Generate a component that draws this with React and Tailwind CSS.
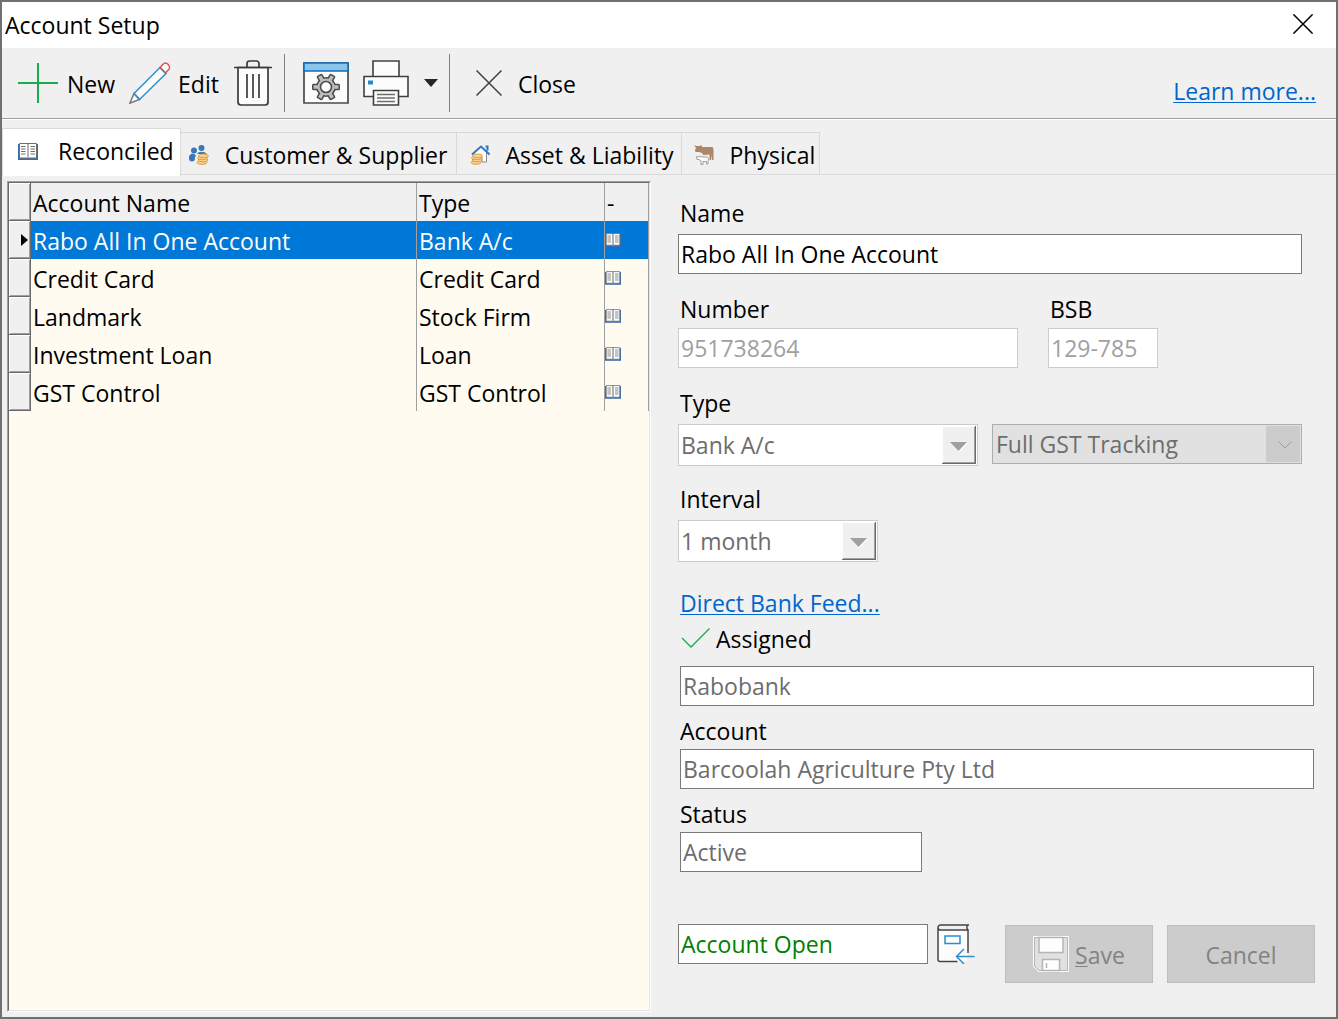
import { useState } from 'react';
import clsx from 'clsx';

const ACCOUNTS = [
  { name: 'Rabo All In One Account', type: 'Bank A/c' },
  { name: 'Credit Card', type: 'Credit Card' },
  { name: 'Landmark', type: 'Stock Firm' },
  { name: 'Investment Loan', type: 'Loan' },
  { name: 'GST Control', type: 'GST Control' },
];

const FIELD = 'block h-10 w-full border bg-white px-[2px] text-[23px]';
const FIELD_NORMAL = 'border-[#7a7a7a]';
const FIELD_DISABLED = 'border-[#cccccc] text-[#a0a0a0]';
const FIELD_READONLY = 'border-[#7a7a7a] text-[#6d6d6d]';
const LABEL = 'block h-8 leading-[30px]';
const RAISED = 'border-b border-r border-[#696969] bg-[#f0f0f0] shadow-[inset_1px_1px_0_#fff,inset_-1px_-1px_0_#a0a0a0]';
const CELL = 'truncate border-r border-[#a0a0a0] px-[2px] pb-0 pt-[2px]';

function PlusIcon() {
  return (
    <svg className="h-10 w-10" viewBox="0 0 40 40" stroke="#18ab50" strokeWidth="2">
      <path d="M20 0v40M0 20h40" />
    </svg>
  );
}

function PencilIcon() {
  return (
    <svg className="h-[42px] w-[42px]" viewBox="0 0 42 42" fill="none" strokeWidth="1.5">
      <path d="M5 31.5 31 5.5l6 6L10.500 37.5z" fill="#fcfcfc" stroke="#2d8fd0" />
      <path d="M31 5.500l3-3.200c1.500-1.500 3.500-1.500 5 0s2 4 .5 5.500L36.500 11z" fill="#fcfcfc" stroke="#e94b4b" />
      <path d="M31 5.500l5.500 5.500" stroke="#777777" />
      <path d="M5 31.500 .8 41.200l9.700-3.700z" fill="#fcfcfc" stroke="#777777" />
      <path d="M5 31.500l5.500 6" stroke="#2d8fd0" />
    </svg>
  );
}

function TrashIcon() {
  return (
    <svg className="h-[46px] w-[38px]" viewBox="0 0 38 46" fill="none" stroke="#3b3b3b" strokeWidth="1.700">
      <path d="M4 7.500h30V42a3 3 0 0 1-3 3H7a3 3 0 0 1-3-3z" fill="#fcfcfc" />
      <path d="M0 7.500h38M13 7V3.500A2.500 2.500 0 0 1 15.500 1h7A2.500 2.500 0 0 1 25 3.500V7" />
      <path d="M13 14v24M19 14v24M25 14v24" />
    </svg>
  );
}

function SettingsIcon() {
  return (
    <svg className="h-[42px] w-[46px]" viewBox="0 0 46 42">
      <path d="M1 1h44v40H1z" fill="#fcfcfc" stroke="#4a4a4a" strokeWidth="1.700" />
      <path d="M1 1h44v8H1z" fill="#8cc5ea" stroke="#0f6cbd" strokeWidth="1.500" />
      <g transform="translate(23 25)">
        <g fill="#bdbdbd" stroke="#4a4a4a" strokeWidth="3" strokeLinejoin="round">
          <circle r="8.500" />
          <path d="M-12.500-1.800h25v3.600h-25z" />
          <path d="M-12.500-1.800h25v3.600h-25z" transform="rotate(60)" />
          <path d="M-12.500-1.800h25v3.600h-25z" transform="rotate(120)" />
        </g>
        <g fill="#bdbdbd">
          <circle r="8.500" />
          <path d="M-12.500-1.800h25v3.600h-25z" />
          <path d="M-12.500-1.800h25v3.600h-25z" transform="rotate(60)" />
          <path d="M-12.500-1.800h25v3.600h-25z" transform="rotate(120)" />
        </g>
        <circle r="5.500" fill="#fcfcfc" stroke="#4a4a4a" strokeWidth="1.600" />
      </g>
    </svg>
  );
}

function PrinterIcon() {
  return (
    <svg className="h-[46px] w-[46px]" viewBox="0 0 46 46" fill="#fcfcfc" stroke="#404040" strokeWidth="1.600">
      <path d="M10 1h26v18H10z" />
      <path d="M1 16.500h44v20H1z" />
      <path d="M10.500 30.500h25v14.500h-25z" />
      <path d="M14 34.500h18M14 38h18M14 41.500h18" stroke="#6d6d6d" strokeWidth="1.300" />
      <path d="M5 20.500h5v4H5z" fill="#1e8bcd" stroke="none" />
    </svg>
  );
}

function CrossIcon({ className }) {
  return (
    <svg className={className} viewBox="0 0 26 26" fill="none" stroke="currentColor">
      <path d="M.5.5l25 25M25.500.5l-25 25" />
    </svg>
  );
}

function BookIcon({ className }) {
  return (
    <svg className={className} viewBox="0 0 20 17">
      <path d="M0 1h20v16H0z" fill="#3b6ea8" />
      <path d="M1.500.5H10v14.500H1.500zM10 .5h8.500v14.500H10z" fill="#fff" stroke="#6d6d6d" />
      <path d="M9 1h2v14H9z" fill="#b5b5b5" />
      <path d="M3 3.500h4.500M3 6h4.500M3 8.500h4.500M3 11h4.500M12.500 3.500H17M12.500 6H17M12.500 8.500H17M12.500 11H17" stroke="#6d6d6d" />
    </svg>
  );
}

function Coins({ x, y }) {
  return (
    <g transform={`translate(${x} ${y})`} fill="#f7d596" stroke="#e39a35">
      <ellipse cx="6" cy="8.500" rx="5" ry="1.800" />
      <ellipse cx="7" cy="6" rx="5" ry="1.800" />
      <ellipse cx="6.500" cy="3.800" rx="5" ry="1.800" />
      <ellipse cx="7.500" cy="1.800" rx="5" ry="1.800" />
    </g>
  );
}

function PeopleIcon() {
  return (
    <svg className="h-5 w-5" viewBox="0 0 20 20">
      <g fill="#3d77b5">
        <circle cx="12.500" cy="3" r="3" />
        <circle cx="5" cy="5.500" r="3" />
        <path d="M8 9c1-3 8.500-3 9.500 0zM0 13c0-5 5-5 7-2.500L5.500 13z" />
        <circle cx="3" cy="13.500" r="3" />
      </g>
      <Coins x="7" y="9" />
    </svg>
  );
}

function HouseIcon() {
  return (
    <svg className="h-5 w-5" viewBox="0 0 20 20" fill="none">
      <path d="M4.500 8 11 2l6 6v9H9z" fill="#fff" />
      <path d="M16.500 8v9H12v-5" stroke="#8a8a8a" />
      <path d="M2 9.500 11 1.500l8.500 8M15.500 1.500h2v4" stroke="#3277bb" strokeWidth="2" />
      <Coins x="0" y="9" />
    </svg>
  );
}

function CowIcon() {
  return (
    <svg className="h-5 w-5" viewBox="0 0 20 20">
      <path d="M0 0l2.500 1h3L7.500 0 8 2h10.500l1 2v11h-1.500V10l-1 5h-1.500V9.500L9.500 10 8 8 5 7H1.500L1 5l1-2z" fill="#ab8767" />
      <path d="M2.500 11.500 5 12l1-1 2 1h5.500l1 1.500-.5 3V19h-1.500v-2.500H9V19.500H7V16l-2-1.500H3z" fill="#fcfcfc" stroke="#a0a0a0" />
    </svg>
  );
}

function LedgerIcon() {
  return (
    <svg className="h-10 w-[38px]" viewBox="0 0 38 40" fill="none" strokeWidth="1.500">
      <path d="M1 5v30.500a2 2 0 0 0 2 2h26l2-7V5.500H1z" fill="#fcfcfc" />
      <path d="M20.500 37.500H3a2 2 0 0 1-2-2V3.500A2.500 2.500 0 0 1 3.500 1H32M31 29V6H3.500A2.500 2.500 0 0 1 1 3.500M31 1c-1.500 1.500-1.500 3.500 0 5" stroke="#444444" />
      <path d="M8 12h15v7.500H8zM37.500 32.500H20M27 25l-7.500 7.500L27 40" stroke="#2d8fd0" />
    </svg>
  );
}

function FloppyIcon() {
  return (
    <svg className="h-9 w-9" viewBox="0 0 36 36" stroke="#b5b5b5">
      <path d="M.5.5h35v35H5.500l-5-5z" fill="#e3e3e3" stroke="#fcfcfc" />
      <path d="M1.500 1.500h33v33H6l-4.500-4.500z" fill="#e1e1e1" />
      <path d="M6 1.500h24v15H6z" fill="#fefefe" strokeWidth="1.500" />
      <path d="M9.500 23.500h17v11h-17z" fill="#fefefe" strokeWidth="1.500" />
      <path d="M13.500 27v5" strokeWidth="1.500" />
    </svg>
  );
}

function Tab({ icon, children, active, onClick, className }) {
  return (
    <button
      type="button"
      role="tab"
      aria-selected={active}
      onClick={onClick}
      className={clsx(
        'flex items-center whitespace-nowrap border-r border-t border-[#d9d9d9]',
        active ? '-mb-[2px] h-12 border-l bg-white pb-[3px]' : 'h-[42px] pt-[2px]',
        className
      )}
    >
      {icon}
      {children}
    </button>
  );
}

function ComboBox({ id, value, className }) {
  return (
    <div className={clsx('relative', className)}>
      <select
        id={id}
        disabled
        className="block h-[42px] w-full appearance-none border border-[#cccccc] bg-white px-[2px] text-[#6d6d6d] disabled:opacity-100"
      >
        <option>{value}</option>
      </select>
      <div className={clsx(RAISED, 'pointer-events-none absolute bottom-[2px] right-[2px] top-[2px] flex w-[34px] items-center justify-center pt-1')}>
        <svg className="h-[10px] w-[18px]" viewBox="0 0 18 10">
          <path d="M1 1h17l-8.500 9z" fill="#fff" />
          <path d="M0 0h17L8.500 9z" fill="#a0a0a0" />
        </svg>
      </div>
    </div>
  );
}

function AccountTable({ selected, onSelect }) {
  return (
    <div className="border border-b-white border-l-[#a0a0a0] border-r-white border-t-[#a0a0a0]">
      <div className="h-full border border-b-[#e3e3e3] border-l-[#696969] border-r-[#e3e3e3] border-t-[#696969] bg-[#fffbf0]">
        <table className="w-full table-fixed border-separate border-spacing-0 text-left">
          <colgroup>
            <col className="w-[22px]" />
            <col />
            <col className="w-[188px]" />
            <col className="w-11" />
          </colgroup>
          <thead>
            <tr className="h-[38px] bg-[#f0f0f0]">
              <td className={clsx(RAISED, 'p-0')} />
              <th className={clsx(CELL, 'font-normal')}>Account Name</th>
              <th className={clsx(CELL, 'font-normal')}>Type</th>
              <th className={clsx(CELL, 'font-normal')}>-</th>
            </tr>
          </thead>
          <tbody>
            {ACCOUNTS.map((account, i) => (
              <tr
                key={account.name}
                onClick={() => onSelect(i)}
                className={clsx('h-[38px]', i === selected && 'bg-[#0078d7] text-white')}
              >
                <td className={clsx(RAISED, 'p-0')}>
                  {i === selected && (
                    <svg className="ml-auto mr-[2px] h-3 w-[7px]" viewBox="0 0 7 12">
                      <path d="M0 0l7 6-7 6z" />
                    </svg>
                  )}
                </td>
                <td className={CELL}>{account.name}</td>
                <td className={CELL}>{account.type}</td>
                <td className="border-r border-[#a0a0a0] p-0">
                  <BookIcon className="h-[14px] w-4" />
                </td>
              </tr>
            ))}
          </tbody>
        </table>
      </div>
    </div>
  );
}

function AccountForm() {
  return (
    <form className="pl-[27px] pr-[22px] pt-[17px]" onSubmit={(e) => e.preventDefault()}>
      <div className="pr-3">
        <label htmlFor="name" className={clsx(LABEL, 'pl-[2px]')}>Name</label>
        <input id="name" defaultValue="Rabo All In One Account" className={clsx(FIELD, FIELD_NORMAL, 'mt-1')} />

        <div className="mt-5 flex gap-[30px]">
          <div className="w-[340px]">
            <label htmlFor="number" className={clsx(LABEL, 'pl-[2px]')}>Number</label>
            <input id="number" disabled defaultValue="951738264" className={clsx(FIELD, FIELD_DISABLED, 'mt-[2px]')} />
          </div>
          <div className="w-[110px]">
            <label htmlFor="bsb" className={clsx(LABEL, 'pl-[2px]')}>BSB</label>
            <input id="bsb" disabled defaultValue="129-785" className={clsx(FIELD, FIELD_DISABLED, 'mt-[2px]')} />
          </div>
        </div>

        <label htmlFor="type" className={clsx(LABEL, 'mt-5 pl-[2px]')}>Type</label>
        <div className="mt-1 flex gap-[14px]">
          <ComboBox id="type" value="Bank A/c" className="w-[300px]" />
          <div className="relative flex-1">
            <select
              aria-label="GST tracking"
              disabled
              className="block h-10 w-full appearance-none border border-[#adadad] bg-[#e1e1e1] px-[3px] text-[#6d6d6d] disabled:opacity-100"
            >
              <option>Full GST Tracking</option>
            </select>
            <div className="pointer-events-none absolute right-[2px] top-[2px] flex h-9 w-[34px] items-center justify-center bg-[#cccccc] pl-1 pt-[2px]">
              <svg className="h-2 w-[14px]" viewBox="0 0 14 8" fill="none" stroke="#a0a0a0">
                <path d="M.5.5 7 7 13.500.5" />
              </svg>
            </div>
          </div>
        </div>

        <label htmlFor="interval" className={clsx(LABEL, 'mt-[18px] pl-[2px]')}>Interval</label>
        <ComboBox id="interval" value="1 month" className="mt-1 w-[200px]" />
      </div>

      <div className="pl-[2px]">
        <a href="#feed" className={clsx(LABEL, 'mt-[26px] w-fit text-[#0066cc] underline decoration-1 underline-offset-2')}>
          Direct Bank Feed...
        </a>
        <div className="mt-1 flex h-8 items-start gap-[6px]">
          <svg className="mt-1 h-5 w-[30px]" viewBox="0 0 30 20" fill="none" stroke="#18ab50" strokeWidth="1.300">
            <path d="M2 10l9 9L29.500.5" />
          </svg>
          <label htmlFor="feed-bank" className={LABEL}>Assigned</label>
        </div>
        <input id="feed-bank" readOnly value="Rabobank" className={clsx(FIELD, FIELD_READONLY, 'mt-[10px]')} />

        <label htmlFor="feed-account" className={clsx(LABEL, 'mt-[10px]')}>Account</label>
        <input id="feed-account" readOnly value="Barcoolah Agriculture Pty Ltd" className={clsx(FIELD, FIELD_READONLY, 'mt-[1px]')} />

        <label htmlFor="feed-status" className={clsx(LABEL, 'mt-[10px]')}>Status</label>
        <div className="mt-[1px] w-[242px]">
          <input id="feed-status" readOnly value="Active" className={clsx(FIELD, FIELD_READONLY)} />
        </div>
      </div>

      <div className="mt-[52px] flex items-start">
        <div className="w-[250px]">
          <input aria-label="Account state" readOnly value="Account Open" className={clsx(FIELD, FIELD_NORMAL, 'text-[#008000]')} />
        </div>
        <button type="button" aria-label="Close account" className="ml-[9px]">
          <LedgerIcon />
        </button>
        <div className="-mr-px ml-auto flex gap-[14px] pt-px text-[#838383]">
          <button type="submit" disabled className="flex h-[58px] w-[148px] items-center justify-center gap-[6px] border border-[#bfbfbf] bg-[#cccccc]">
            <FloppyIcon />
            <span className="pt-[2px]"><span className="underline decoration-1 underline-offset-2">S</span>ave</span>
          </button>
          <button type="button" disabled className="h-[58px] w-[148px] border border-[#bfbfbf] bg-[#cccccc] pt-[2px]">
            Cancel
          </button>
        </div>
      </div>
    </form>
  );
}

export default function App() {
  const [tab, setTab] = useState('reconciled');
  const [selected, setSelected] = useState(0);

  return (
    <div className="flex min-h-screen flex-col border-2 border-[#707070] bg-[#f0f0f0] font-['Open_Sans',sans-serif] text-[23px] leading-8 text-black">
      <header className="flex h-[46px] items-center justify-between bg-white pl-[3px] pr-[23px]">
        <h1>Account Setup</h1>
        <button type="button" aria-label="Close window" className="pb-[2px]">
          <CrossIcon className="h-5 w-5 stroke-2" />
        </button>
      </header>

      <div className="flex h-[71px] items-center border-b border-[#a0a0a0] pl-4 pr-5">
        <button type="button" className="flex items-center gap-[9px]">
          <PlusIcon />
          <span className="pt-[2px]">New</span>
        </button>
        <button type="button" className="ml-[14px] flex items-center gap-[7px]">
          <PencilIcon />
          <span className="pt-[2px]">Edit</span>
        </button>
        <button type="button" aria-label="Delete" className="ml-[15px]">
          <TrashIcon />
        </button>
        <div className="ml-3 h-[58px] w-px bg-[#808080]" />
        <button type="button" aria-label="Settings" className="ml-[18px]">
          <SettingsIcon />
        </button>
        <button type="button" aria-label="Print" className="ml-[14px] flex items-center gap-[15px]">
          <PrinterIcon />
          <svg className="h-2 w-[14px]" viewBox="0 0 14 8">
            <path d="M0 0h14L7 8z" fill="#262626" />
          </svg>
        </button>
        <div className="ml-[11px] h-[58px] w-px bg-[#808080]" />
        <button type="button" className="ml-[26px] flex items-center gap-4">
          <CrossIcon className="h-[26px] w-[26px] stroke-[1.5] text-[#404040]" />
          <span className="pt-[2px]">Close</span>
        </button>
        <a href="#learn" className="ml-auto mt-4 text-[#0066cc] underline decoration-1 underline-offset-2">
          Learn more...
        </a>
      </div>

      <div role="tablist" className="flex h-14 items-end border-b border-b-[#d9d9d9] border-t border-t-white">
        <Tab
          icon={<BookIcon className="h-[17px] w-5" />}
          active={tab === 'reconciled'}
          onClick={() => setTab('reconciled')}
          className="gap-5 pl-[15px] pr-[6px]"
        >
          Reconciled
        </Tab>
        <Tab icon={<PeopleIcon />} active={tab === 'customer'} onClick={() => setTab('customer')} className="gap-4 pl-2 pr-[9px]">
          Customer &amp; Supplier
        </Tab>
        <Tab icon={<HouseIcon />} active={tab === 'asset'} onClick={() => setTab('asset')} className="gap-[15px] pl-[13px] pr-2">
          Asset &amp; Liability
        </Tab>
        <Tab icon={<CowIcon />} active={tab === 'physical'} onClick={() => setTab('physical')} className="gap-[15px] pl-3 pr-1">
          Physical
        </Tab>
      </div>

      <main className="grid flex-1 grid-cols-[644fr_685fr] pb-[5px] pl-[5px] pt-[6px]">
        <AccountTable selected={selected} onSelect={setSelected} />
        <AccountForm />
      </main>
    </div>
  );
}
